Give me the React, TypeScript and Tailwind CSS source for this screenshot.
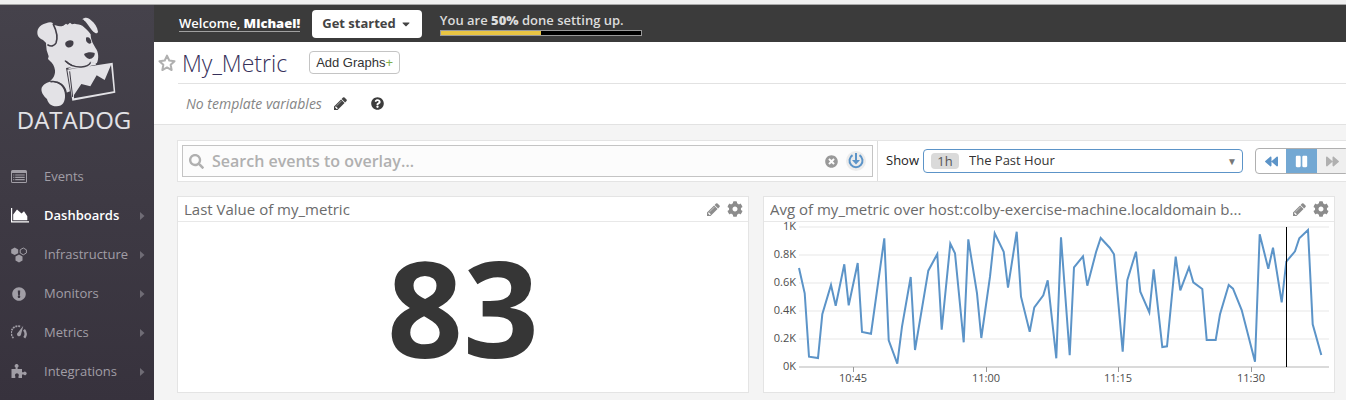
import type { ReactNode } from "react";
import { FaSearch, FaCog, FaQuestionCircle, FaTimesCircle, FaExclamationCircle, FaBackward, FaForward, FaPause, FaCaretDown } from "react-icons/fa";

const LINE =
  "799,268 804.7,293.3 809,356.7 818,358 822.3,314.3 831,285 835.7,305.7 844.3,264.3 848.7,305.3 857.7,263 862,332 871,333.7 884.3,238.3 888.7,340.3 897.3,363.7 902,326.7 910.7,277 915,350 928.3,270.7 937.3,254 941.7,329.7 950.3,243.7 955,253.3 963.7,342.3 968.3,239.3 977,293.3 981.3,338 990,276.7 994.7,233.3 1003.7,251.7 1008,287.7 1016.7,231.7 1021,296.7 1029.7,331.7 1034.3,307.3 1043.3,295.3 1047.7,280.3 1056.3,358.3 1061,237.3 1069.7,355.3 1074,267.3 1083,256.3 1087.3,285.7 1096,252.3 1100.7,238 1109.7,247.7 1114,254.3 1122.7,351.7 1127.3,280.3 1136,251.7 1140.3,291.7 1149.3,312.3 1153.7,269.3 1162.3,347 1167,346.3 1175.7,256.7 1180.3,290.3 1189,267.3 1193.3,282.3 1202.3,289 1206.7,340 1215.7,340 1220,314.3 1228.7,285 1233,288.7 1241.7,310 1255,361.7 1259.7,234.3 1268.3,268.7 1273,247.7 1281.7,302.3 1286.3,261.7 1295,251.3 1299.3,238.3 1308,230 1312.7,324.3 1321.3,355";

const Y_TICKS = [
  ["1K", 227],
  ["0.8K", 255],
  ["0.6K", 283],
  ["0.4K", 311],
  ["0.2K", 339],
  ["0K", 367],
] as const;

const X_TICKS = [
  ["10:45", 853],
  ["11:00", 986],
  ["11:15", 1118],
  ["11:30", 1251],
] as const;

function DogLogo() {
  return (
    <svg viewBox="108 47 243 276" className="h-[92px] w-[81px]" aria-hidden="true">
      <g fill="#e3e2e6">
        <path d="M158 72 C168 76 178 80 190 76 L198 70 L203 73 L210 67 L216 72 L224 70 C234 72 240 72 247 76 C256 84 266 92 272 102 C272 120 280 132 290 148 C297 162 296 182 288 192 L272 194 C262 206 252 208 240 202 L206 205 L201 210 L212 272 L199 277 C196 262 188 250 174 245 L150 243 C160 234 166 224 165 210 C163 196 158 188 150 182 L144 176 L146 168 L140 150 L138 130 Z" />
        <path d="M113 104 C109 88 118 74 138 69 C150 63 162 66 159 73 C166 88 170 106 166 122 C164 132 158 137 150 135 C140 132 136 124 129 119 C120 115 115 111 113 104 Z" />
        <path d="M247 57 C254 50 266 51 273 60 C284 68 292 80 294 94 C292 101 286 99 281 96 C272 86 266 76 258 66 C255 62 251 60 247 57 Z" />
        <path d="M125 262 C132 248 150 240 164 246 C182 250 194 264 195 284 C196 304 188 318 170 318 C152 318 144 308 141 296 C130 286 122 274 125 262 Z" />
      </g>
      <g fill="none" stroke="#423f48" strokeLinecap="round">
        <path d="M160 72 C170 92 174 112 168 128 C163 138 152 139 144 134" strokeWidth="5" />
        <path d="M249 60 C254 76 266 92 282 99" strokeWidth="5" />
        <path d="M153 244 C176 241 197 256 199 284" strokeWidth="5" />
        <path d="M196 182 C208 194 224 201 244 200 C258 199 268 194 272 186 L286 192" strokeWidth="4" />
      </g>
      <g fill="#423f48">
        <path d="M196 127 C200 120 212 117 219 122 C223 129 219 138 211 141 C202 143 194 137 196 127 Z" />
        <path d="M258 112 C266 108 273 114 274 127 C268 134 260 128 258 120 Z" />
        <path d="M252 161 C261 155 275 154 284 158 C285 168 278 175 268 176 C260 174 254 168 252 161 Z" />
        <path d="M198 203 L341 181 L349 280 L215 304 Z" />
      </g>
      <path d="M202 208 L338 187 L346 277 L217 301 Z M222 294 L341 273 L333 194 L314 239 L290 225 L271 258 L244 251 L222 284 Z" fill="#e3e2e6" fillRule="evenodd" />
      <path d="M209 213 L218 290" stroke="#423f48" strokeWidth="3" />
      <path d="M202 207 C218 204 232 204 242 207 C256 208 266 203 272 196 L288 193 L287 188 L266 182 L220 196 Z" fill="#e3e2e6" />
      <path d="M198 183 C210 195 226 201 244 200 C258 199 268 194 272 186" fill="none" stroke="#423f48" strokeWidth="4" />
    </svg>
  );
}

function PencilIcon() {
  return (
    <svg viewBox="0 0 1536 1536" className="size-[13px]" fill="currentColor" aria-hidden="true">
      <path d="M363 1408l91-91-235-235-91 91v107h128v128h107zM886 480q0-22-22-22-10 0-17 7l-542 542q-7 7-7 17 0 22 22 22 10 0 17-7l542-542q7-7 7-17zM832 288l416 416-832 832H0v-416zM1515 384q0 53-37 90l-166 166-416-416 166-165q36-38 90-38 53 0 91 38l235 234q37 39 37 91z" />
    </svg>
  );
}

function StarIcon() {
  return (
    <svg viewBox="0 0 18 18" className="size-[18px]" fill="none" stroke="currentColor" strokeWidth="2" strokeLinejoin="round" aria-hidden="true">
      <path d="M9 1.600l2.250 4.900 5.300.65-3.900 3.650 1 5.250L9 13.450l-4.650 2.600 1-5.250L1.450 7.150l5.300-.65z" />
    </svg>
  );
}

function EventsIcon() {
  return (
    <svg viewBox="0 0 16 14" className="h-[14px] w-4" aria-hidden="true">
      <path fillRule="evenodd" fill="currentColor" d="M1.500 0h13A1.500 1.500 0 0 1 16 1.500v10A1.500 1.500 0 0 1 14.500 13h-13A1.500 1.500 0 0 1 0 11.500v-10A1.500 1.500 0 0 1 1.500 0zM1 3v8.500q0 .5.5.5h13q.5 0 .5-.5V3z" />
      <path stroke="currentColor" strokeWidth="1.200" d="M2.300 5h1M4.200 5h9.500M2.300 7.300h1M4.200 7.300h9.500M2.300 9.700h1M4.200 9.700h9.500" />
    </svg>
  );
}

function AreaIcon() {
  return (
    <svg viewBox="0 0 18 15" className="h-[15px] w-[18px]" aria-hidden="true">
      <path d="M.6 0v13.900H18" fill="none" stroke="currentColor" strokeWidth="1.200" />
      <path d="M2.200 12.300V6.500L6 1.500l4.500 4 2.500-2.300 3.300 5v4.100z" fill="currentColor" />
    </svg>
  );
}

function HexIcon() {
  return (
    <svg viewBox="0 0 17 16" className="h-4 w-[17px]" aria-hidden="true" fill="currentColor">
      <path d="M3.700.5 7.200 2.400v3.800L3.700 8.100.2 6.200V2.400z" />
      <path d="M8 7.600l3.500 2v3.900L8 15.500l-3.500-2V9.600z" />
      <path d="M12.300 1l3.100 1.800v3.200l-3.100 1.800L9.200 6V2.800z" fill="none" stroke="currentColor" />
    </svg>
  );
}

function GaugeIcon() {
  return (
    <svg viewBox="0 0 17 15" className="h-[15px] w-[17px]" aria-hidden="true">
      <path d="M2.500 13A6.800 6.800 0 0 1 10 1.800" fill="none" stroke="currentColor" strokeWidth="1.700" strokeDasharray="1.900 .8" />
      <path d="M13 4.800a6.500 6.500 0 0 1 .3 8" fill="none" stroke="currentColor" strokeWidth="2.400" />
      <path d="M12.300.8 10 9.500a2 2 0 1 1-3-2z" fill="currentColor" />
    </svg>
  );
}

function PuzzleIcon() {
  return (
    <svg viewBox="0 0 16 15" className="h-[15px] w-4" aria-hidden="true" fill="currentColor">
      <path d="M.5 5h4.100V3.600a1.900 1.900 0 1 1 2 0V5H11v3.300h1.600a1.700 1.700 0 1 1 0 2.200H11V14H7.500v-1.800a1.900 1.900 0 1 0-3.200 0V14H.5z" />
    </svg>
  );
}

const NAV: { label: string; icon: ReactNode; active?: boolean; leaf?: boolean }[] = [
  { label: "Events", icon: <EventsIcon />, leaf: true },
  { label: "Dashboards", icon: <AreaIcon />, active: true },
  { label: "Infrastructure", icon: <HexIcon /> },
  { label: "Monitors", icon: <FaExclamationCircle className="ml-px size-[14px]" /> },
  { label: "Metrics", icon: <GaugeIcon /> },
  { label: "Integrations", icon: <PuzzleIcon /> },
];

function Sidebar() {
  return (
    <aside className="flex w-[154px] shrink-0 flex-col bg-linear-to-b from-[#45424b] to-[#37323d]">
      <a href="#" className="flex flex-col items-center pt-[11px] pr-1.5 text-[#e3e2e6]">
        <span className="pl-1">
          <DogLogo />
        </span>
        <span className="text-[24px] leading-6">DATADOG</span>
      </a>
      <nav className="flex flex-col pt-[25px]">
        {NAV.map((n) => (
          <a
            key={n.label}
            href="#"
            className={
              n.active
                ? "flex h-[39px] items-center pr-[9px] pl-[11px] text-[13px] font-semibold text-white"
                : "flex h-[39px] items-center pr-[9px] pl-[11px] text-[13px] font-medium text-[#a19ea6]"
            }
          >
            <span className="flex w-[33px] shrink-0 items-center">{n.icon}</span>
            <span className="flex-1">{n.label}</span>
            {!n.leaf && (
              <svg viewBox="0 0 5 8" className="h-2 w-[5px] text-[#6f6c75]" aria-hidden="true">
                <path d="M0 0l4.500 4L0 8z" fill="currentColor" />
              </svg>
            )}
          </a>
        ))}
      </nav>
    </aside>
  );
}

function Card({ title, children }: { title: string; children: ReactNode }) {
  return (
    <section className="flex min-w-0 flex-1 flex-col border border-[#e4e4e4] bg-white">
      <header className="flex h-[25px] items-center border-b border-[#e8e8e8] pr-[5px] pl-1.5">
        <h2 className="min-w-0 flex-1 truncate text-[15px] text-[#6b6b6b]">{title}</h2>
        <button type="button" aria-label="Edit graph" className="mr-[7px] text-[#8c8c8c]">
          <PencilIcon />
        </button>
        <button type="button" aria-label="Graph settings" className="text-[#8c8c8c]">
          <FaCog className="size-4" />
        </button>
      </header>
      {children}
    </section>
  );
}

function Chart() {
  return (
    <svg viewBox="764 222 570 170" className="block w-full overflow-visible" role="img" aria-label="Avg of my_metric">
      {Y_TICKS.map(([t, y]) => (
        <g key={t}>
          <path d={`M799 ${y}H1329`} stroke={t === "0K" ? "#b5b5b5" : "#f3f3f3"} strokeWidth={t === "0K" ? 1 : 2} />
          <text x="796" y={y + 3} textAnchor="end" fontSize="11" fill="#4d4d4d">
            {t}
          </text>
        </g>
      ))}
      {X_TICKS.map(([t, x]) => (
        <g key={t}>
          <path d={`M${x + 0.5} 367v5`} stroke="#999" />
          <text x={x} y="382" textAnchor="middle" fontSize="11" fill="#4d4d4d">
            {t}
          </text>
        </g>
      ))}
      <polyline points={LINE} fill="none" stroke="#5c94c8" strokeWidth="2" />
      <path d="M1286.500 227v140" stroke="#000" />
    </svg>
  );
}

export default function App() {
  return (
    <div className="flex min-h-screen flex-col overflow-hidden bg-[#f4f4f4] font-['Open_Sans','Noto_Sans',sans-serif]">
      <div className="h-[5px] border-b border-[#a8a8a8] bg-[#f0f0f0]" />
      <div className="flex flex-1">
        <Sidebar />
        <div className="flex min-w-0 flex-1 flex-col">
          <div className="flex h-[37px] items-center bg-[#3b3b3b] pl-[25px]">
            <a href="#" className="border-b border-[#a0a0a0] text-[13px] leading-4 font-semibold text-white">
              Welcome, <b>Michael!</b>
            </a>
            <button type="button" className="ml-3 flex h-7 items-center gap-1 rounded bg-white px-2.5 text-[13px] font-bold text-[#444]">
              Get started <FaCaretDown className="size-3" />
            </button>
            <div className="ml-[18px] flex w-[202px] flex-col gap-0.5">
              <span id="setup" className="text-[13px] leading-4 font-semibold whitespace-nowrap text-[#dcdcdc]">
                You are <b>50%</b> done setting up.
              </span>
              <div role="progressbar" aria-labelledby="setup" aria-valuenow={50} className="h-1.5 border border-[#999] bg-black">
                <div className="h-full w-1/2 bg-[#e9c543]" />
              </div>
            </div>
          </div>

          <div className="flex flex-col border-b border-[#e2e2e2] bg-white">
            <div className="flex h-[41px] items-center pl-1">
              <button type="button" aria-label="Favorite" className="text-[#b0b0b0]">
                <StarIcon />
              </button>
              <h1 className="ml-1.5 text-[23px] leading-8 font-light text-[#36305a]">My_Metric</h1>
              <button type="button" className="ml-[22px] flex h-[23px] items-center rounded border border-[#c4c4c4] px-1.5 font-['Liberation_Sans',sans-serif] text-[13px] text-[#333]">
                Add Graphs<span className="text-[#7fae4d]">+</span>
              </button>
            </div>
            <div className="ml-6 flex h-[41px] items-center border-t border-[#e2e2e2] pb-0.5 pl-2">
              <span className="text-[14px] text-[#858585] italic">No template variables</span>
              <button type="button" aria-label="Edit template variables" className="ml-3 text-[#444]">
                <PencilIcon />
              </button>
              <button type="button" aria-label="Help" className="ml-6 text-[#3c3c3c]">
                <FaQuestionCircle className="size-[13px]" />
              </button>
            </div>
          </div>

          <div className="mt-[15px] ml-[23px] flex h-[42px] border-y border-l border-[#e4e4e4] bg-white">
            <div className="flex min-w-0 flex-1 p-1">
              <label className="flex min-w-0 flex-1 items-center border border-[#c4c4c4] bg-[#fcfcfc] pr-1.5 pl-1.5">
                <FaSearch className="size-[15px] shrink-0 text-[#b0b0b0]" />
                <input
                  type="text"
                  aria-label="Search events"
                  placeholder="Search events to overlay…"
                  className="ml-2 min-w-0 flex-1 bg-transparent text-[16px] font-semibold outline-none placeholder:text-[#b0b0b0]"
                />
                <button type="button" aria-label="Clear search" className="text-[#999]">
                  <FaTimesCircle className="size-[13px]" />
                </button>
                <button type="button" aria-label="Overlay events" className="ml-2 rounded-full bg-[#ececec] p-0.5 text-[#5c94c8]">
                  <svg viewBox="0 0 16 16" className="size-4" fill="none" stroke="currentColor" strokeWidth="2" aria-hidden="true">
                    <path d="M4.500 2.200a6.500 6.500 0 1 0 7 0M8 0v9" />
                    <path d="M4 7h8l-4 4.500z" fill="currentColor" stroke="none" />
                  </svg>
                </button>
              </label>
            </div>
            <div className="flex w-[469px] shrink-0 items-center overflow-hidden border-l border-[#dcdcdc] pl-2">
              <label htmlFor="range" className="text-[13px] text-[#222]">
                Show
              </label>
              <div className="relative ml-1 w-80 shrink-0">
                <select id="range" className="block h-6 w-full appearance-none rounded border border-[#5c94c8] bg-white pl-[45px] text-[13px] text-[#333]">
                  <option>The Past Hour</option>
                </select>
                <span className="pointer-events-none absolute top-1 left-2 w-7 rounded-sm bg-[#dadada] text-center text-[13px] leading-4 text-[#555]">1h</span>
                <span className="pointer-events-none absolute top-1 right-1.5 text-[10px] leading-4 text-[#777]">▼</span>
              </div>
              <div className="ml-3 flex h-[26px] shrink-0 overflow-hidden rounded border border-[#b0b0b0]">
                <button type="button" aria-label="Back" className="flex w-[30px] items-center justify-center text-[#5c94c8]">
                  <FaBackward className="size-[13px]" />
                </button>
                <button type="button" aria-label="Pause" className="flex w-[31px] items-center justify-center bg-[#73a8d3] text-white">
                  <FaPause className="size-[13px]" />
                </button>
                <button type="button" aria-label="Forward" className="flex w-[31px] items-center justify-center bg-[#efefef] text-[#b0b0b0]">
                  <FaForward className="size-[13px]" />
                </button>
              </div>
            </div>
          </div>

          <div className="mt-3.5 mr-[11px] mb-2 ml-[23px] flex flex-1 gap-3.5">
            <Card title="Last Value of my_metric">
              <div className="flex flex-1 items-center justify-center text-[133px] leading-[160px] font-bold text-[#363636]">83</div>
            </Card>
            <Card title="Avg of my_metric over host:colby-exercise-machine.localdomain b...">
              <Chart />
            </Card>
          </div>
        </div>
      </div>
    </div>
  );
}
